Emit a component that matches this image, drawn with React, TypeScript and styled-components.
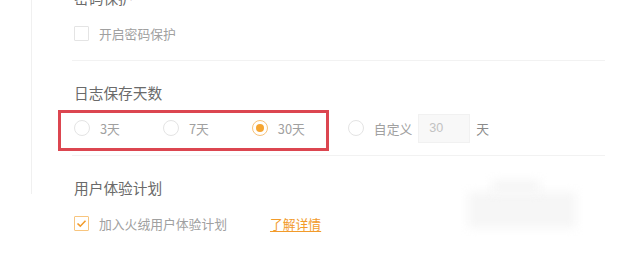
import React from "react";
import styled, { createGlobalStyle, css } from "styled-components";

const Global = createGlobalStyle`
  html, body { margin: 0; padding: 0; background: #fff; }
  body { font-family: "Noto Sans CJK SC", "Noto Sans", sans-serif; overflow: hidden; }
`;

const Page = styled.div`
  position: relative;
  width: 625px;
  height: 274px;
  overflow: hidden;
  background: #fff;
`;

const Panel = styled.div`
  margin-left: 31px;
  height: 228px;
  border-left: 1px solid #f0f0f0;
`;

const Content = styled.div`
  margin-top: -34px;
  margin-left: 40px;
  width: 533px;
`;

const Section = styled.div<{ $last?: boolean }>`
  padding: 22px 0 12px 2px;
  border-bottom: ${(p) => (p.$last ? "none" : "1px solid #f2f2f2")};
`;

const Title = styled.div`
  height: 20px;
  line-height: 20px;
  font-size: 14.7px;
  color: #6a6a6a;
`;

const Row = styled.div`
  margin-top: 10px;
  height: 30px;
  display: flex;
  align-items: center;
  font-size: 12.8px;
  color: #a0a0a0;
`;

const Option = styled.label<{ $gap?: number }>`
  display: flex;
  align-items: center;
  margin-right: ${(p) => p.$gap ?? 43}px;
`;

const Radio = styled.span<{ $on?: boolean }>`
  box-sizing: border-box;
  width: 16px;
  height: 16px;
  border-radius: 50%;
  border: 1px solid ${(p) => (p.$on ? "#f7c27a" : "#e4e4e4")};
  display: flex;
  align-items: center;
  justify-content: center;
  margin-right: 10px;
  ${(p) =>
    p.$on &&
    css`
      &::after {
        content: "";
        width: 8px;
        height: 8px;
        border-radius: 50%;
        background: #f5a532;
      }
    `}
`;

const Box = styled.span<{ $on?: boolean }>`
  box-sizing: border-box;
  width: 15px;
  height: 15px;
  border: 1px solid ${(p) => (p.$on ? "#f8c57e" : "#e4e4e4")};
  border-radius: 1px;
  margin-right: 10px;
  display: flex;
  align-items: center;
  justify-content: center;
`;

const Input = styled.div`
  box-sizing: border-box;
  width: 52px;
  height: 29px;
  margin: 0 6px;
  background: #f8f8f8;
  border: 1px solid #f1f1f1;
  color: #c2c2c2;
  font-family: "Liberation Sans", "Noto Sans CJK SC", sans-serif;
  font-size: 12.5px;
  line-height: 27px;
  padding-left: 10px;
`;

const Unit = styled.span`
  color: #8a8a8a;
`;

const Link = styled.a`
  margin-left: 43px;
  color: #f29b2b;
  text-decoration: underline;
  text-underline-offset: 2px;
`;

const Highlight = styled.div`
  position: absolute;
  left: 58px;
  top: 110px;
  width: 271px;
  height: 41px;
  box-sizing: border-box;
  border: 3px solid #dc4650;
  pointer-events: none;
`;

const Smudge = styled.div<{ $x: number; $y: number; $w: number; $h: number }>`
  position: absolute;
  left: ${(p) => p.$x}px;
  top: ${(p) => p.$y}px;
  width: ${(p) => p.$w}px;
  height: ${(p) => p.$h}px;
  background: #f6f6f6;
  filter: blur(5px);
`;

const Check = () => (
  <svg width="11" height="9" viewBox="0 0 11 9">
    <path d="M1.5 4.5 L4.3 7.2 L9.5 1.8" fill="none" stroke="#f29b2b" strokeWidth="1.6" />
  </svg>
);

export default function App() {
  return (
    <Page>
      <Global />
      <Panel>
        <Content>
          <Section>
            <Title>密码保护</Title>
            <Row>
              <Option>
                <Box />
                开启密码保护
              </Option>
            </Row>
          </Section>
          <Section>
            <Title>日志保存天数</Title>
            <Row>
              <Option>
                <Radio />
                3天
              </Option>
              <Option>
                <Radio />
                7天
              </Option>
              <Option>
                <Radio $on />
                30天
              </Option>
              <Option $gap={0}>
                <Radio />
                自定义
              </Option>
              <Input>30</Input>
              <Unit>天</Unit>
            </Row>
          </Section>
          <Section $last>
            <Title>用户体验计划</Title>
            <Row>
              <Option $gap={0}>
                <Box $on>
                  <Check />
                </Box>
                加入火绒用户体验计划
              </Option>
              <Link>了解详情</Link>
            </Row>
          </Section>
        </Content>
      </Panel>
      <Highlight />
      <Smudge $x={468} $y={192} $w={108} $h={36} />
      <Smudge $x={492} $y={180} $w={48} $h={14} />
    </Page>
  );
}
